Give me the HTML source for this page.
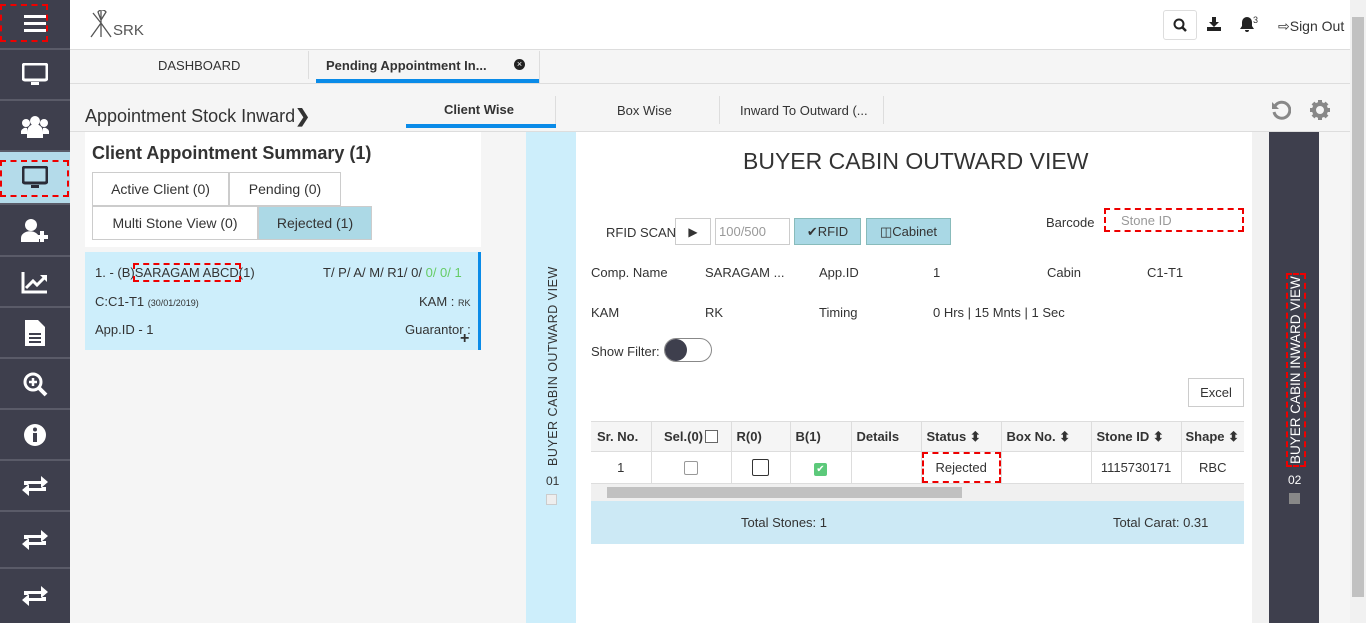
<!DOCTYPE html>
<html><head><meta charset="utf-8"><style>
*{box-sizing:border-box;margin:0;padding:0}
body{width:1366px;height:623px;overflow:hidden;background:#f5f5f5;font-family:"Liberation Sans",sans-serif;font-size:13px;color:#333;position:relative}
.a{position:absolute}
.sb{left:0;top:0;width:70px;height:623px;background:#3e3f4d}
.sb div{position:absolute;left:0;width:70px;border-bottom:2px solid #5a5b68;display:flex;align-items:center;justify-content:center}
.t{position:absolute;white-space:nowrap}
.btn{position:absolute;border:1px solid #ccc;background:#fff;display:flex;align-items:center;justify-content:center}
th,td{border-right:1px solid #ddd;height:30px;font-size:13px;overflow:hidden;white-space:nowrap}
</style></head><body>
<div class="a sb">
<div style="top:0;height:50px"><div style="position:absolute;left:0;top:4px;width:48px;height:38px;border:2px dashed #e00"></div><svg width="22" height="18"><rect y="0" width="22" height="3" fill="#fff"/><rect y="7" width="22" height="3" fill="#fff"/><rect y="14" width="22" height="3" fill="#fff"/></svg></div>
<div style="top:50px;height:51px"><svg width="26" height="24"><rect x="1" y="1" width="24" height="16" rx="2" fill="none" stroke="#fff" stroke-width="3"/><rect x="9" y="19" width="8" height="3" fill="#fff"/></svg></div>
<div style="top:101px;height:51px"><svg width="28" height="24"><circle cx="14" cy="7" r="5" fill="#fff"/><circle cx="5" cy="9" r="4" fill="#fff"/><circle cx="23" cy="9" r="4" fill="#fff"/><path d="M6 24v-6a8 8 0 0 1 16 0v6z M0 20v-3a5 5 0 0 1 6-3v6z M28 20v-3a5 5 0 0 0-6-3v6z" fill="#fff"/></svg></div>
<div style="top:152px;height:53px;background:#b4dbea"><div style="position:absolute;left:0;top:8px;width:69px;height:37px;border:2px dashed #e00"></div><svg width="26" height="24"><rect x="1" y="1" width="24" height="16" rx="2" fill="none" stroke="#2b2c38" stroke-width="3"/><rect x="9" y="19" width="8" height="3" fill="#2b2c38"/></svg></div>
<div style="top:205px;height:52px"><svg width="28" height="24"><circle cx="10" cy="7" r="6" fill="#fff"/><path d="M0 24v-4a8 6 0 0 1 18 0v4z" fill="#fff"/><path d="M19 13h4v4h4v4h-4v3h-4v-3h-4v-4h4z" fill="#fff"/></svg></div>
<div style="top:257px;height:51px"><svg width="28" height="24"><path d="M2 2v20h24" fill="none" stroke="#fff" stroke-width="3"/><path d="M5 18l7-7 4 4 8-8" fill="none" stroke="#fff" stroke-width="3"/><path d="M19 5h7v7z" fill="#fff"/></svg></div>
<div style="top:308px;height:51px"><svg width="20" height="26"><path d="M0 0h13l7 7v19h-20z" fill="#fff"/><rect x="4" y="13" width="12" height="2" fill="#3e3f4d"/><rect x="4" y="17" width="12" height="2" fill="#3e3f4d"/><rect x="4" y="21" width="12" height="2" fill="#3e3f4d"/></svg></div>
<div style="top:359px;height:51px"><svg width="26" height="26"><circle cx="11" cy="11" r="8" fill="none" stroke="#fff" stroke-width="3"/><path d="M16 16l8 8" stroke="#fff" stroke-width="4"/><path d="M7 11h8M11 7v8" stroke="#fff" stroke-width="2.5"/></svg></div>
<div style="top:410px;height:51px"><svg width="24" height="24"><circle cx="12" cy="12" r="11" fill="#fff"/><rect x="10" y="10" width="4" height="9" fill="#3e3f4d"/><circle cx="12" cy="6.5" r="2" fill="#3e3f4d"/></svg></div>
<div style="top:461px;height:51px"><svg width="28" height="22"><path d="M3 10V6h17V1l7 6-7 6V9H7v1zM25 12v4H8v5l-7-6 7-6v4h13v-1z" fill="#fff"/></svg></div>
<div style="top:512px;height:57px"><svg width="28" height="22"><path d="M3 10V6h17V1l7 6-7 6V9H7v1zM25 12v4H8v5l-7-6 7-6v4h13v-1z" fill="#fff"/></svg></div>
<div style="top:569px;height:54px;border:none"><svg width="28" height="22"><path d="M3 10V6h17V1l7 6-7 6V9H7v1zM25 12v4H8v5l-7-6 7-6v4h13v-1z" fill="#fff"/></svg></div>
</div>
<div class="a" style="left:70px;top:0;width:1280px;height:50px;background:#fff;border-bottom:1px solid #ddd"></div>
<svg class="a" style="left:88px;top:10px" width="28" height="28"><path d="M5 3l8 10M13 13l-10 14M13 13l10 14M13 1v26M10 2a5 5 0 0 1 8 0l-5 8z" fill="none" stroke="#555" stroke-width="1.3"/></svg>
<div class="t" style="left:113px;top:22px;font-size:15px;color:#555">SRK</div>
<div class="btn" style="left:1163px;top:10px;width:34px;height:30px;border-radius:3px;border-color:#ddd"><svg width="14" height="14"><circle cx="6" cy="6" r="4.5" fill="none" stroke="#222" stroke-width="2"/><path d="M9 9l4 4" stroke="#222" stroke-width="2.5"/></svg></div>
<svg class="a" style="left:1207px;top:17px" width="14" height="14"><path d="M5 0h4v5h3l-5 5-5-5h3z M0 10h14v4h-14z" fill="#222"/></svg>
<svg class="a" style="left:1240px;top:16px" width="14" height="16"><path d="M7 1a5 5 0 0 1 5 5v4l2 3h-14l2-3v-4a5 5 0 0 1 5-5z M5 14h4a2 2 0 0 1-4 0z" fill="#222"/></svg>
<div class="t" style="left:1253px;top:15px;font-size:9px">3</div>
<div class="t" style="left:1278px;top:18px;font-size:14px">⇨Sign Out</div>
<div class="a" style="left:70px;top:50px;width:1280px;height:34px;background:#f5f5f5;border-bottom:1px solid #ddd"></div>
<div class="t" style="left:158px;top:58px;font-size:13px">DASHBOARD</div>
<div class="a" style="left:308px;top:51px;width:1px;height:28px;background:#ddd"></div>
<div class="t" style="left:326px;top:58px;font-size:13px;font-weight:bold">Pending Appointment In...</div>
<div class="a" style="left:514px;top:59px;width:11px;height:11px;border-radius:50%;background:#222;color:#fff;font-size:9px;line-height:11px;text-align:center">×</div>
<div class="a" style="left:316px;top:79px;width:224px;height:4px;background:#0a8be8"></div>
<div class="a" style="left:539px;top:51px;width:1px;height:32px;background:#ddd"></div>
<div class="t" style="left:85px;top:106px;font-size:18px">Appointment Stock Inward<b>❯</b></div>
<div class="t" style="left:444px;top:102px;font-size:13px;font-weight:bold">Client Wise</div>
<div class="a" style="left:406px;top:124px;width:150px;height:4px;background:#0a8be8"></div>
<div class="a" style="left:555px;top:96px;width:1px;height:28px;background:#ddd"></div>
<div class="t" style="left:617px;top:103px;font-size:13px">Box Wise</div>
<div class="a" style="left:719px;top:96px;width:1px;height:28px;background:#ddd"></div>
<div class="t" style="left:740px;top:103px;font-size:13px">Inward To Outward (...</div>
<div class="a" style="left:883px;top:96px;width:1px;height:28px;background:#ddd"></div>
<svg class="a" style="left:1271px;top:100px" width="20" height="20"><path d="M4 6a8 8 0 1 1-1 6" fill="none" stroke="#888" stroke-width="3"/><path d="M1 2v7h7z" fill="#888"/></svg>
<svg class="a" style="left:1310px;top:100px" width="20" height="20"><circle cx="10" cy="10" r="6" fill="none" stroke="#888" stroke-width="4"/><g stroke="#888" stroke-width="4"><path d="M10 0v4M10 16v4M0 10h4M16 10h4M3 3l3 3M14 14l3 3M17 3l-3 3M3 17l3-3"/></g></svg>
<div class="a" style="left:70px;top:131px;width:1280px;height:1px;background:#ddd"></div>
<div class="a" style="left:85px;top:132px;width:396px;height:115px;background:#fff"></div>
<div class="t" style="left:92px;top:143px;font-size:18px;font-weight:bold;color:#333">Client Appointment Summary (1)</div>
<div class="btn" style="left:92px;top:172px;width:137px;height:34px;font-size:14px">Active Client (0)</div>
<div class="btn" style="left:229px;top:172px;width:112px;height:34px;font-size:14px">Pending (0)</div>
<div class="btn" style="left:92px;top:206px;width:166px;height:34px;font-size:14px">Multi Stone View (0)</div>
<div class="btn" style="left:258px;top:206px;width:114px;height:34px;font-size:14px;background:#acd9e6">Rejected (1)</div>
<div class="a" style="left:85px;top:252px;width:396px;height:98px;background:#cdeefb;border-right:3px solid #0a8be8"></div>
<div class="t" style="left:95px;top:265px;font-size:13px">1. - (B)<span style="outline:2px dashed #e00">SARAGAM ABCD</span>(1)</div>
<div class="t" style="left:323px;top:265px;font-size:13px">T/ P/ A/ M/ R1/ 0/ <span style="color:#6c6">0/ 0/ 1</span></div>
<div class="t" style="left:95px;top:294px;font-size:13px">C:C1-T1 <span style="font-size:9px">(30/01/2019)</span></div>
<div class="t" style="left:419px;top:294px;font-size:13px">KAM : <span style="font-size:9px">RK</span></div>
<div class="t" style="left:95px;top:322px;font-size:13px">App.ID - 1</div>
<div class="t" style="left:405px;top:322px;font-size:13px">Guarantor :</div>
<div class="t" style="left:460px;top:330px;font-size:16px;font-weight:bold">+</div>
<div class="a" style="left:526px;top:132px;width:50px;height:491px;background:#cdeefb"></div>
<div class="t" style="left:546px;top:466px;transform:rotate(-90deg);transform-origin:0 0;font-size:12.5px;letter-spacing:.5px;color:#333">BUYER CABIN OUTWARD VIEW</div>
<div class="t" style="left:546px;top:474px;font-size:12px">01</div>
<div class="a" style="left:546px;top:494px;width:11px;height:11px;border:1px solid #ccc;background:#eee"></div>
<div class="a" style="left:576px;top:132px;width:676px;height:491px;background:#fff"></div>
<div class="t" style="left:743px;top:148px;font-size:23px;color:#333">BUYER CABIN OUTWARD VIEW</div>
<div class="t" style="left:606px;top:225px;font-size:13px">RFID SCAN</div>
<div class="btn" style="left:675px;top:218px;width:36px;height:27px;font-size:12px">▶</div>
<div class="btn" style="left:715px;top:218px;width:75px;height:27px;justify-content:flex-start;padding-left:3px;color:#999;font-size:13px">100/500</div>
<div class="btn" style="left:794px;top:218px;width:67px;height:27px;background:#a9d8e5;border-color:#8bb;font-size:13px">✔RFID</div>
<div class="btn" style="left:866px;top:218px;width:85px;height:27px;background:#a9d8e5;border-color:#8bb;font-size:13px">◫Cabinet</div>
<div class="t" style="left:1046px;top:215px;font-size:13px">Barcode</div>
<div class="a" style="left:1104px;top:208px;width:140px;height:24px;border:2px dashed #e00;color:#999;padding:3px 0 0 15px;font-size:13px">Stone ID</div>
<div class="t" style="left:591px;top:265px">Comp. Name</div><div class="t" style="left:705px;top:265px">SARAGAM ...</div><div class="t" style="left:819px;top:265px">App.ID</div><div class="t" style="left:933px;top:265px">1</div><div class="t" style="left:1047px;top:265px">Cabin</div><div class="t" style="left:1147px;top:265px">C1-T1</div>
<div class="t" style="left:591px;top:305px">KAM</div><div class="t" style="left:705px;top:305px">RK</div><div class="t" style="left:819px;top:305px">Timing</div><div class="t" style="left:933px;top:305px">0 Hrs | 15 Mnts | 1 Sec</div>
<div class="t" style="left:591px;top:344px">Show Filter:</div>
<div class="a" style="left:664px;top:338px;width:48px;height:24px;border:1px solid #888;border-radius:12px;background:#fff"><div style="width:22px;height:22px;border-radius:50%;background:#3e3f4d"></div></div>
<div class="btn" style="left:1188px;top:378px;width:56px;height:29px">Excel</div>
<table class="a" style="left:591px;top:421px;width:653px;border-collapse:collapse;border-top:1px solid #ddd;table-layout:fixed">
<colgroup><col style="width:60px"><col style="width:80px"><col style="width:59px"><col style="width:61px"><col style="width:70px"><col style="width:80px"><col style="width:90px"><col style="width:90px"><col style="width:63px"></colgroup>
<tr style="background:#f5f5f5;font-weight:bold"><th style="text-align:left;padding-left:6px">Sr. No.</th><th>Sel.(0)<span style="display:inline-block;width:13px;height:13px;border:1px solid #666;vertical-align:-2px;background:#fff;margin-left:2px"></span></th><th style="text-align:left;padding-left:5px">R(0)</th><th style="text-align:left;padding-left:5px">B(1)</th><th style="text-align:left;padding-left:5px">Details</th><th style="text-align:left;padding-left:5px">Status ⬍</th><th style="text-align:left;padding-left:5px">Box No. ⬍</th><th style="text-align:left;padding-left:5px">Stone ID ⬍</th><th style="text-align:left;padding-left:4px;border:none">Shape ⬍</th></tr>
<tr style="border-top:1px solid #ddd;border-bottom:1px solid #ddd"><td style="text-align:center">1</td><td style="text-align:center"><span style="display:inline-block;width:14px;height:14px;border:1px solid #999;border-radius:2px;vertical-align:middle"></span></td><td style="text-align:center"><span style="display:inline-block;width:17px;height:17px;border:1px solid #333;border-radius:2px;vertical-align:middle"></span></td><td style="text-align:center"><span style="display:inline-block;width:13px;height:13px;background:#5cc97a;color:#fff;font-size:10px;line-height:13px;border-radius:2px">✔</span></td><td></td><td style="text-align:center"><span style="display:inline-block;border:2px dashed #e00;padding:6px 12px">Rejected</span></td><td></td><td style="text-align:center">1115730171</td><td style="text-align:center;border:none">RBC</td></tr>
</table>
<div class="a" style="left:591px;top:484px;width:653px;height:17px;background:#f0f0f0"><div style="position:absolute;left:16px;top:3px;width:355px;height:11px;background:#c1c1c1"></div></div>
<div class="a" style="left:591px;top:501px;width:653px;height:43px;background:#cce9f5"></div>
<div class="t" style="left:741px;top:515px">Total Stones: 1</div>
<div class="t" style="left:1113px;top:515px">Total Carat: 0.31</div>
<div class="a" style="left:1252px;top:132px;width:17px;height:491px;background:#f1f1f1"></div>
<div class="a" style="left:1269px;top:132px;width:50px;height:491px;background:#3e3f4d"></div>
<div class="t" style="left:1288px;top:465px;transform:rotate(-90deg);transform-origin:0 0;font-size:13.5px;color:#fff;outline:2px dashed #e00;padding:0 1px;line-height:16px">BUYER CABIN INWARD VIEW</div>
<div class="t" style="left:1288px;top:473px;color:#fff;font-size:12px">02</div>
<div class="a" style="left:1289px;top:493px;width:11px;height:11px;background:#888"></div>
<div class="a" style="left:1350px;top:0;width:16px;height:623px;background:#f1f1f1"><div style="position:absolute;left:2px;top:17px;width:12px;height:580px;background:#c1c1c1"></div></div>
</body></html>
